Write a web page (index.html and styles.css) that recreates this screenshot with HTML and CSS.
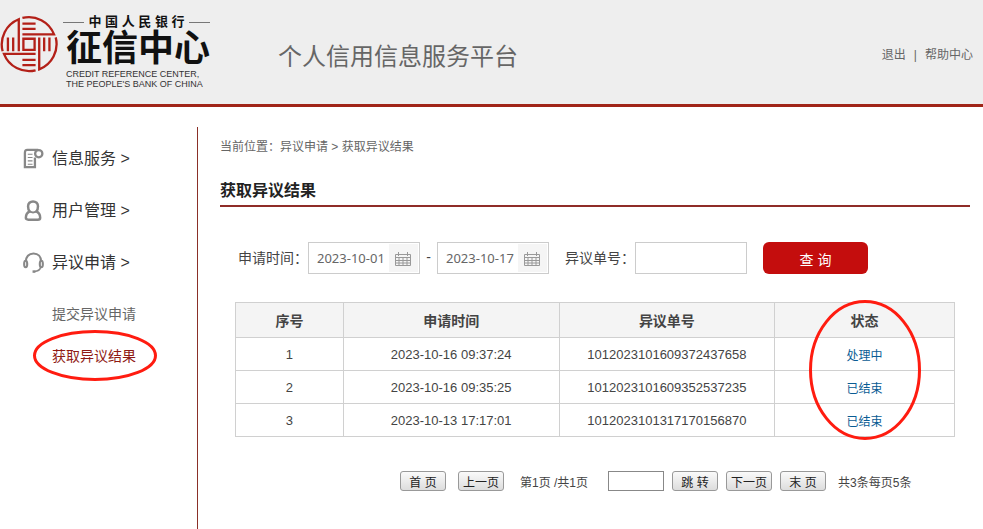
FILE: index.html
```html
<!DOCTYPE html>
<html lang="zh-CN">
<head>
    <meta charset="UTF-8">
    <meta name="viewport" content="width=device-width, initial-scale=1.0">
    <title>个人信用信息服务平台</title>
    <link rel="stylesheet" href="styles.css">
</head>
<body>
    <header class="header">
        <div class="logo">
            <svg class="logo-seal" viewBox="0 0 176 176" fill="none" stroke="#b32018" stroke-width="7">
                <path d="M68 9A82 82 0 0 1 164 59H68M68 26h40M68 42h40"/>
                <path d="M169 68A82 82 0 0 1 119 165V68M134 68v42M150 68v42"/>
                <path d="M108 168A82 82 0 0 1 12 118H108M68 136h40M68 152h40"/>
                <path d="M8 110A82 82 0 0 1 57 13V110M24 68v42M40 68v42"/>
                <path d="M71 72h34v34H71z"/>
            </svg>
            <div class="logo-text">
                <div class="logo-bank"><span>中 国 人 民 银 行</span></div>
                <div class="logo-name">征信中心</div>
                <div class="logo-en">CREDIT REFERENCE CENTER,<br>THE PEOPLE'S BANK OF CHINA</div>
            </div>
        </div>
        <h1 class="site-title">个人信用信息服务平台</h1>
        <nav class="top-nav">
            <a href="#">退出</a>
            <span>|</span>
            <a href="#">帮助中心</a>
        </nav>
    </header>

    <div class="layout">
        <!-- 左侧菜单 -->
        <nav class="sidebar">
            <a class="menu-item" href="#">
                <svg class="menu-icon" viewBox="0 0 22 22" fill="none" stroke="#888" stroke-width="2.400">
                    <path d="M16 2H4.500Q2 2 2 5V20H12.500V10"/>
                    <circle cx="16.500" cy="6" r="3.800"/>
                    <path d="M5 6.500h5M5 10h5M5 13.500h5M5 17h5" stroke-width="1.200"/>
                </svg>
                <span>信息服务 &gt;</span>
            </a>
            <a class="menu-item" href="#">
                <svg class="menu-icon" viewBox="0 0 22 22" fill="none" stroke="#888" stroke-width="2.600">
                    <path d="M7 12C5.500 10.500 5.300 9 5.300 6.500C5.300 3.500 7.500 1.500 10.500 1.500S15.700 3.500 15.700 6.500C15.700 9 15.500 10.500 14 12C17 13.500 18 15.500 18 18.500Q18 20.600 15.500 20.600H5.500Q3 20.600 3 18.500C3 15.500 4 13.500 7 12Z"/>
                    <path d="M7 12.300Q10.500 13.800 14 12.300" stroke-width="2"/>
                </svg>
                <span>用户管理 &gt;</span>
            </a>
            <a class="menu-item" href="#">
                <svg class="menu-icon" viewBox="0 0 22 22" fill="none" stroke="#888" stroke-width="2.200">
                    <path d="M3 10C3 5 6 1.500 11 1.500S19 5 19 10"/>
                    <ellipse cx="2.800" cy="12.500" rx="1.600" ry="3.400"/>
                    <ellipse cx="19.200" cy="12.500" rx="1.600" ry="3.400"/>
                    <path d="M18.500 16Q17.500 20 12 20.500" stroke-width="1.600"/>
                    <path d="M10 20.500h3" stroke-width="2.600"/>
                </svg>
                <span>异议申请 &gt;</span>
            </a>
            <div class="submenu">
                <a href="#">提交异议申请</a>
                <a class="active" href="#">获取异议结果
                    <svg class="mark mark-menu" viewBox="0 0 124 51"><ellipse cx="62" cy="25.500" rx="60.500" ry="24"/></svg>
                </a>
            </div>
        </nav>

        <main class="content">
            <div class="breadcrumb">当前位置<span class="colon">：</span>异议申请 &gt; 获取异议结果</div>
            <h2 class="page-title">获取异议结果</h2>

            <form class="search">
                <label for="startDate">申请时间<span class="colon">：</span></label>
                <div class="date-box">
                    <input type="text" id="startDate" value="2023-10-01">
                    <button type="button" class="date-btn" aria-label="选择开始日期">
                        <svg viewBox="0 0 16 15" fill="none" stroke="#999" stroke-width="1">
                            <path d="M.5 2.500h15v11H.5zM.5 5.500h15M.5 8.500h15M.5 11h15M4 5.500v8M8 5.500v8M12 5.500v8M3.500 0v4M12.500 0v4"/>
                        </svg>
                    </button>
                </div>
                <label class="dash" for="endDate">-</label>
                <div class="date-box">
                    <input type="text" id="endDate" value="2023-10-17">
                    <button type="button" class="date-btn" aria-label="选择结束日期">
                        <svg viewBox="0 0 16 15" fill="none" stroke="#999" stroke-width="1">
                            <path d="M.5 2.500h15v11H.5zM.5 5.500h15M.5 8.500h15M.5 11h15M4 5.500v8M8 5.500v8M12 5.500v8M3.500 0v4M12.500 0v4"/>
                        </svg>
                    </button>
                </div>
                <label class="label-no" for="orderNo">异议单号<span class="colon">：</span></label>
                <input type="text" id="orderNo" class="text-box">
                <button type="button" class="query-btn">查 询</button>
            </form>

            <div class="result">
                <table>
                    <thead>
                        <tr>
                            <th class="col-index">序号</th>
                            <th class="col-time">申请时间</th>
                            <th class="col-no">异议单号</th>
                            <th>状态</th>
                        </tr>
                    </thead>
                    <tbody>
                        <tr>
                            <td>1</td>
                            <td>2023-10-16 09:37:24</td>
                            <td>1012023101609372437658</td>
                            <td><a href="#">处理中</a></td>
                        </tr>
                        <tr>
                            <td>2</td>
                            <td>2023-10-16 09:35:25</td>
                            <td>1012023101609352537235</td>
                            <td><a href="#">已结束</a></td>
                        </tr>
                        <tr>
                            <td>3</td>
                            <td>2023-10-13 17:17:01</td>
                            <td>1012023101317170156870</td>
                            <td><a href="#">已结束</a></td>
                        </tr>
                    </tbody>
                </table>
                <svg class="mark mark-status" viewBox="0 0 112 140"><ellipse cx="56" cy="70" rx="54.500" ry="68.500"/></svg>
            </div>

            <!-- 分页 -->
            <div class="pager">
                <button type="button" class="first">首 页</button>
                <button type="button">上一页</button>
                <span class="page-info">第1页 /共1页</span>
                <input type="text" aria-label="页码">
                <button type="button">跳 转</button>
                <button type="button">下一页</button>
                <button type="button">末 页</button>
                <span class="page-total">共3条每页5条</span>
            </div>
        </main>
    </div>
</body>
</html>
```

FILE: styles.css
```css
* {
    box-sizing: border-box;
}
body {
    margin: 0;
    min-height: 100vh;
    display: flex;
    flex-direction: column;
    background: #fff;
    color: #444;
    font-family: "Liberation Sans", "Noto Sans CJK SC", sans-serif;
    font-size: 12px;
}
a {
    color: inherit;
    text-decoration: none;
}
button, input {
    font-family: inherit;
    margin: 0;
}

/* 顶部 */
.header {
    display: flex;
    align-items: center;
    height: 107px;
    padding-right: 10px;
    background: #eee;
    border-bottom: 3px solid #a02418;
}
.logo {
    display: flex;
    width: 278px;
    height: 74px;
}
.logo-seal {
    width: 58px;
    height: 58px;
    margin-right: 5px;
}
.logo-text {
    width: 147px;
    color: #111;
}
.logo-bank {
    display: flex;
    align-items: center;
    gap: 4px;
    font-size: 13px;
    font-weight: bold;
    line-height: 14px;
    white-space: nowrap;
}
.logo-bank::before,
.logo-bank::after {
    content: "";
    flex: 1;
    height: 1px;
    background: #777;
}
.logo-name {
    padding-left: 3px;
    font-family: "Liberation Serif", "Noto Sans CJK SC", serif;
    font-size: 36px;
    font-weight: bold;
    line-height: 40px;
    white-space: nowrap;
}
.logo-en {
    padding-left: 3px;
    font-size: 9px;
    line-height: 10px;
    white-space: nowrap;
    color: #333;
}
.site-title {
    margin: 0;
    padding-top: 10px;
    font-size: 24px;
    font-weight: 400;
    line-height: 36px;
    color: #666;
}
.top-nav {
    display: flex;
    align-items: baseline;
    gap: 8px;
    margin-left: auto;
    padding-top: 3px;
    color: #666;
}

/* 主体 */
.layout {
    flex: 1;
    display: flex;
    margin-top: 20px;
}
.sidebar {
    width: 198px;
    padding: 5px 0 0 23px;
    border-right: 1px solid #8a3028;
}
.menu-item {
    display: flex;
    align-items: center;
    gap: 8px;
    height: 52px;
    font-size: 16px;
    color: #333;
}
.menu-item span {
    padding-bottom: 2px;
}
.menu-icon {
    width: 21px;
    height: 21px;
}
.submenu {
    padding: 5px 0 0 29px;
}
.submenu a {
    position: relative;
    display: block;
    width: 84px;
    font-size: 14px;
    line-height: 42px;
    color: #666;
}
.submenu .active {
    color: #8f1a14;
}

/* 红色圈注 */
.mark {
    position: absolute;
    fill: none;
    stroke: #ff1c10;
    stroke-width: 3;
    pointer-events: none;
}
.mark-menu {
    left: -19px;
    top: -5px;
    width: 124px;
    height: 51px;
}
.mark-status {
    right: 34px;
    top: -2px;
    width: 112px;
    height: 140px;
}

.content {
    flex: 1;
    padding: 10px 13px 0 22px;
}
.colon {
    font-family: "Noto Sans CJK TC", sans-serif;
    line-height: 1;
}
.breadcrumb {
    line-height: 20px;
    color: #666;
}
.page-title {
    margin: 22px 0 35px;
    padding-bottom: 2px;
    border-bottom: 2px solid #8f2c28;
    font-size: 16px;
    line-height: 24px;
    color: #222;
}
.search {
    display: flex;
    align-items: center;
    padding-left: 18px;
    font-size: 14px;
}
.search label {
    padding-bottom: 2px;
}
.date-box {
    display: flex;
    width: 112px;
    height: 32px;
    padding: 1px;
    border: 1px solid #ccc;
}
.date-box input {
    flex: 1;
    min-width: 0;
    padding: 0 0 0 7px;
    border: 0;
    font-family: "Noto Sans", sans-serif;
    font-size: 13px;
    color: #666;
}
.date-btn {
    width: 29px;
    padding: 2px 2px 0 0;
    border: 0;
    background: #f5f5f5;
}
.date-btn svg {
    display: block;
    width: 16px;
    height: 15px;
    margin: 0 auto;
}
.dash {
    width: 17px;
    text-align: center;
}
.label-no {
    margin-left: 16px;
}
.text-box {
    width: 112px;
    height: 32px;
    border: 1px solid #ccc;
}
.query-btn {
    width: 105px;
    height: 32px;
    margin-left: 16px;
    padding: 2px 0 0;
    border: 0;
    border-radius: 6px;
    background: #c40d0d;
    color: #fff;
    font-size: 14px;
}

/* 查询结果 */
.result {
    position: relative;
    margin: 28px 15px 0;
}
table {
    width: 100%;
    table-layout: fixed;
    border-collapse: collapse;
    text-align: center;
}
th, td {
    padding: 0;
    border: 1px solid #d0d0d0;
}
th {
    height: 35px;
    background: #f4f4f4;
    font-size: 14px;
}
td {
    height: 33px;
    font-size: 13px;
}
td a {
    font-size: 12px;
    color: #0a5c94;
}
.col-index {
    width: 15%;
}
.col-time, .col-no {
    width: 30%;
}

.pager {
    display: flex;
    align-items: center;
    gap: 8px;
    margin-top: 34px;
    padding-left: 180px;
    white-space: nowrap;
}
.pager button {
    width: 46px;
    height: 20px;
    padding: 0;
    border: 1px solid #999;
    border-radius: 3px;
    background: linear-gradient(#fafafa, #ddd);
    color: #222;
    font-size: 12px;
}
.pager .first {
    margin-right: 4px;
}
.pager input {
    width: 56px;
    height: 20px;
    border: 1px solid #888;
}
.page-info {
    margin: 0 12px 0 8px;
}
.page-total {
    margin-left: 4px;
}
```
